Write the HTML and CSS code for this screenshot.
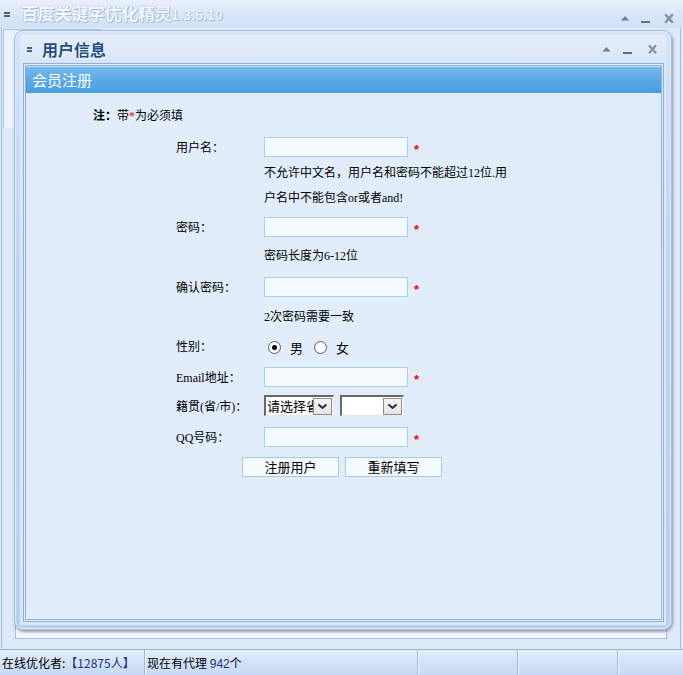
FILE: index.html
```html
<!DOCTYPE html>
<html lang="zh-CN">
<head>
<meta charset="utf-8">
<title>百度关键字优化精灵</title>
<link rel="stylesheet" href="styles.css">
</head>
<body>
<div class="app">
  <header class="app-title">
    <span class="sysmenu"><i></i><i></i></span>
    <span class="app-name">百度关键字优化精灵<small>1.3.6.10</small></span>
    <span class="wincontrols">
      <svg class="ic-up" width="10" height="28" viewBox="0 0 10 28"><path d="M1 20.5 L5 16 L9 20.5 Z" fill="#6d7f98"/></svg>
      <svg class="ic-min" width="9" height="28" viewBox="0 0 9 28"><rect x="0" y="21" width="9" height="2" fill="#5f718b"/></svg>
      <svg class="ic-x" width="10" height="28" viewBox="0 0 10 28"><path d="M1.2 14.2 L8.8 22.8 M8.8 14.2 L1.2 22.8" stroke="#7f90a8" stroke-width="2.4" fill="none"/></svg>
    </span>
  </header>

  <main class="app-body">
    <div class="frame">
      <div class="tab"></div>
      <div class="page"></div>
    </div>
  </main>

  <footer class="statusbar">
    <div class="cell c1">在线优化者:<span class="num">【12875人】</span></div>
    <div class="cell c2">现在有代理 <span class="num">942</span>个</div>
    <div class="cell c3"></div>
    <div class="cell c4"></div>
    <div class="cell c5"></div>
  </footer>

  <section class="dialog">
    <div class="client">
      <div class="dlg-title">
        <span class="sysmenu small"><i></i><i></i></span>
        <span class="dlg-name">用户信息</span>
        <span class="wincontrols dlg-controls">
          <svg width="9" height="28" viewBox="0 0 9 28"><path d="M0.5 16.5 L4.5 12 L8.5 16.5 Z" fill="#6d7f98"/></svg>
          <svg width="9" height="28" viewBox="0 0 9 28"><rect x="0" y="17" width="9" height="2" fill="#5f718b"/></svg>
          <svg width="9" height="28" viewBox="0 0 9 28"><path d="M1 10.3 L8 18.2 M8 10.3 L1 18.2" stroke="#8293aa" stroke-width="2.3" fill="none"/></svg>
        </span>
      </div>
      <div class="panel">
        <div class="panel-head">会员注册</div>
        <div class="content">
          <p class="note"><b>注：</b>带<span class="star">*</span>为必须填</p>
          <div class="form">
            <div class="row r-user">
              <span class="lbl">用户名：</span>
              <span class="input"></span><span class="req">*</span>
            </div>
            <p class="help h-user">不允许中文名，用户名和密码不能超过12位.用<br>户名中不能包含or或者and!</p>
            <div class="row r-pwd">
              <span class="lbl">密码：</span>
              <span class="input"></span><span class="req">*</span>
            </div>
            <p class="help h-pwd">密码长度为6-12位</p>
            <div class="row r-confirm">
              <span class="lbl">确认密码：</span>
              <span class="input"></span><span class="req">*</span>
            </div>
            <p class="help h-confirm">2次密码需要一致</p>
            <div class="row r-sex">
              <span class="lbl">性别：</span>
              <span class="radio checked"></span><span class="opt">男</span>
              <span class="radio"></span><span class="opt">女</span>
            </div>
            <div class="row r-email">
              <span class="lbl">Email地址：</span>
              <span class="input"></span><span class="req">*</span>
            </div>
            <div class="row r-place">
              <span class="lbl">籍贯(省/市)：</span>
              <span class="select s1"><span class="sel-text">请选择省</span><span class="sel-btn"><svg width="11" height="7" viewBox="0 0 11 7"><path d="M1.5 1.5 L5.5 5 L9.5 1.5" stroke="#1b2a55" stroke-width="2" fill="none"/><path d="M1 1 L1.8 1.8" stroke="#3c8be0" stroke-width="1"/></svg></span></span>
              <span class="select s2"><span class="sel-text"></span><span class="sel-btn"><svg width="11" height="7" viewBox="0 0 11 7"><path d="M1.5 1.5 L5.5 5 L9.5 1.5" stroke="#1b2a55" stroke-width="2" fill="none"/><path d="M1 1 L1.8 1.8" stroke="#3c8be0" stroke-width="1"/></svg></span></span>
            </div>
            <div class="row r-qq">
              <span class="lbl">QQ号码：</span>
              <span class="input"></span><span class="req">*</span>
            </div>
            <div class="buttons">
              <span class="btn">注册用户</span>
              <span class="btn">重新填写</span>
            </div>
          </div>
        </div>
      </div>
    </div>
  </section>
</div>
</body>
</html>
```

FILE: styles.css
```css
html, body {
  margin: 0;
  padding: 0;
}
body {
  width: 683px;
  height: 675px;
  overflow: hidden;
  font-family: "Liberation Serif", "Noto Sans CJK SC", serif;
  font-size: 12px;
  color: #000;
  background: #dfeaf8;
}
.app {
  position: relative;
  width: 683px;
  height: 675px;
  display: flex;
  flex-direction: column;
}

/* ---------- outer title bar ---------- */
.app-title {
  height: 28px;
  flex: none;
  display: flex;
  align-items: center;
  background: linear-gradient(#e9f0fb, #d7e5f7 60%, #d2e2f6);
  font-family: "Noto Sans CJK SC", sans-serif;
}
.sysmenu {
  display: flex;
  flex-direction: column;
  gap: 1px;
  width: 6px;
  margin-left: 4px;
  margin-top: 1px;
}
.sysmenu i {
  display: block;
  height: 2px;
  background: #4f6078;
}
.app-name {
  margin-left: 11px;
  font-size: 17px;
  font-weight: bold;
  line-height: 20px;
  letter-spacing: -0.3px;
  color: #f6f9ff;
  text-shadow: 0 0 1px #7f9dc9, 1px 1px 0 #aac0e2;
}
.app-name small {
  font-size: 13px;
  font-weight: bold;
  letter-spacing: 0;
}
.wincontrols {
  margin-left: auto;
  display: flex;
  align-self: stretch;
  padding-right: 9px;
}
.wincontrols svg { display: block; }
.ic-min { margin-left: 11px; }
.ic-x { margin-left: 14px; }

/* ---------- outer body (behind dialog) ---------- */
.app-body {
  flex: 1;
  padding: 0 2px 0 1px;
  display: flex;
}
.frame {
  flex: 1;
  border-left: 1px solid #a3bfe4;
  border-right: 1px solid #a3bfe4;
  display: flex;
  flex-direction: column;
}
.tab {
  margin: 1px 0 0 1px;
  width: 96px;
  height: 98px;
  border: 1px solid #a8c3e7;
  border-bottom: none;
  background: #ecf2fc;
}
.page {
  margin: 0 13px 10px 13px;
  flex: 1;
  border: 1px solid #a3bfe3;
  background: #f4f8fe;
}

/* ---------- status bar ---------- */
.statusbar {
  height: 25px;
  flex: none;
  border-top: 1px solid #93b3dd;
  background: linear-gradient(#e4eefa, #d3e3f6 50%, #c6daf3);
  display: flex;
  font-family: "Noto Sans CJK SC", sans-serif;
  font-size: 12px;
  line-height: 25px;
}
.cell {
  box-sizing: border-box;
  border-right: 1px solid #9db8dd;
  box-shadow: 1px 0 0 #f0f6fd;
  padding-left: 2px;
  white-space: nowrap;
}
.c1 { width: 145px; }
.c2 { width: 273px; }
.c3 { width: 100px; }
.c4 { width: 100px; }
.c5 { flex: 1; border-right: none; box-shadow: none; }
.num {
  font-family: "Liberation Sans", sans-serif;
  color: #1d2f78;
}
.c1 .num { font-family: "Noto Sans CJK SC", sans-serif; }

/* ---------- dialog window ---------- */
.dialog {
  position: absolute;
  left: 14px;
  top: 30px;
  width: 658px;
  height: 600px;
  box-sizing: border-box;
  padding: 4px 5px;
  border: 1px solid #a2bfe5;
  border-radius: 9px;
  background: linear-gradient(#d6e5f7, #bfd5f1 40%, #b8d0ef);
  box-shadow: 1px 2px 3px rgba(70, 80, 100, 0.55), inset 0 0 0 1px #dde9f8;
  display: flex;
}
.client {
  flex: 1;
  display: flex;
  flex-direction: column;
  background: linear-gradient(#e6eefa, #d8e5f7 28px, #dbe7f7 30px);
  border-radius: 4px 4px 0 0;
}
.dlg-title {
  height: 28px;
  flex: none;
  display: flex;
  align-items: center;
  font-family: "Noto Sans CJK SC", sans-serif;
}
.sysmenu.small {
  margin-left: 7px;
  width: 5px;
  gap: 1px;
  margin-top: 0;
}
.dlg-name {
  margin-left: 10px;
  font-size: 16px;
  font-weight: bold;
  line-height: 20px;
  color: #1d4d8b;
  text-shadow: 1px 1px 0 #ffffff;
}
.dlg-controls { padding-right: 9px; }
.dlg-controls svg + svg { margin-left: 12px; }
.dlg-controls svg:last-child { margin-left: 16px; }

.panel {
  flex: 1;
  margin: 0 2px 3px 3px;
  border: 3px double #8cb1df;
  background: #e1edfb;
  display: flex;
  flex-direction: column;
}
.panel-head {
  height: 26px;
  flex: none;
  border-top: 1px solid #c4e1f8;
  background: linear-gradient(#77baec, #5eaae7 45%, #469fe2);
  color: #ffffff;
  font-family: "Noto Sans CJK SC", sans-serif;
  font-size: 15px;
  line-height: 26px;
  padding-left: 6px;
}
.content {
  padding: 15px 0 0 67px;
}
.note {
  margin: 0;
  line-height: 16px;
}
.note b { font-weight: bold; }
.star { color: #f00; }

.form {
  margin-left: 83px;
}
.row {
  display: flex;
  align-items: center;
  height: 21px;
}
.lbl {
  width: 88px;
  flex: none;
  white-space: nowrap;
}
.input {
  box-sizing: border-box;
  width: 144px;
  height: 20px;
  border: 1px solid #a7d3e7;
  background: #f5faff;
}
.req {
  color: #f00;
  font-family: "Liberation Sans", sans-serif;
  font-size: 13px;
  font-weight: bold;
  margin-left: 6px;
  line-height: 13px;
  align-self: flex-end;
  padding-bottom: 1px;
}
.help {
  margin: 0 0 0 88px;
  line-height: 25px;
  white-space: nowrap;
}
.r-user { margin-top: 12px; }
.h-user { margin-top: 4px; }
.r-pwd { margin-top: 5px; }
.h-pwd { margin-top: 7px; line-height: 24px; }
.r-confirm { margin-top: 8px; }
.h-confirm { margin-top: 8px; line-height: 24px; }
.r-sex { margin-top: 6px; }
.r-email { margin-top: 10px; }
.r-place { margin-top: 8px; }
.r-qq { margin-top: 10px; }

.radio {
  box-sizing: border-box;
  width: 13px;
  height: 13px;
  margin: 4px 0 0 4px;
  border-radius: 50%;
  border: 1px solid #5c5c5c;
  background: radial-gradient(circle at 50% 50%, #ffffff 55%, #e6e6e6 100%);
  display: flex;
  align-items: center;
  justify-content: center;
}
.radio.checked::after {
  content: "";
  width: 5px;
  height: 5px;
  border-radius: 50%;
  background: #000;
}
.radio + .opt { margin-left: 9px; margin-top: 4px; font-size: 13px; }
.opt + .radio { margin-left: 11px; }

.select {
  box-sizing: border-box;
  height: 21px;
  display: flex;
  align-items: center;
  border-top: 2px solid #686868;
  border-left: 2px solid #686868;
  border-right: 1px solid #e9e9e9;
  border-bottom: 1px solid #e9e9e9;
  background: #fff;
  overflow: hidden;
}
.s1 { width: 70px; }
.s2 { width: 64px; margin-left: 6px; }
.sel-text {
  flex: 1;
  overflow: hidden;
  white-space: nowrap;
  font-family: "Noto Sans CJK SC", sans-serif;
  font-size: 13px;
  line-height: 18px;
  padding-left: 1px;
}
.sel-btn {
  box-sizing: border-box;
  width: 19px;
  height: 17px;
  margin-right: 1px;
  border: 1px solid #8d8d8d;
  background: linear-gradient(#f7f6f2, #e6e3dc);
  display: flex;
  align-items: center;
  justify-content: center;
}
.sel-btn svg { display: block; }

.buttons {
  margin: 10px 0 0 66px;
  display: flex;
  gap: 6px;
}
.btn {
  box-sizing: border-box;
  width: 97px;
  height: 20px;
  border: 1px solid #9fcde3;
  background: #f5faff;
  text-align: center;
  font-family: "Noto Sans CJK SC", sans-serif;
  font-size: 13px;
  line-height: 18px;
}
```
